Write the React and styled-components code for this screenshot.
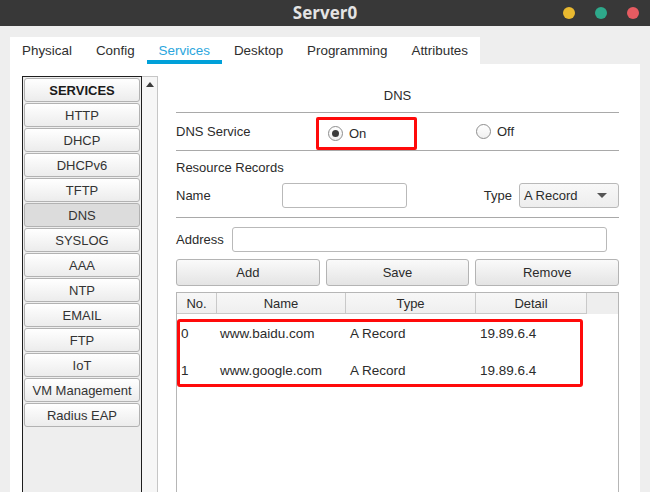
import React from 'react'
import styled, { createGlobalStyle, css } from 'styled-components'

const GlobalStyle = createGlobalStyle`
  html, body {
    margin: 0;
    padding: 0;
    background: #eeeeee;
  }
  body {
    font-family: "Liberation Sans", Arial, sans-serif;
    font-size: 13px;
    color: #2b2b2b;
  }
  * {
    box-sizing: border-box;
  }
`

const Window = styled.div`
  width: 650px;
  height: 492px;
  overflow: hidden;
  display: flex;
  flex-direction: column;
  background: #eeeeee;
`

const TitleBar = styled.div`
  height: 26px;
  flex: none;
  background: #383838;
  display: grid;
  grid-template-columns: 1fr auto 1fr;
  align-items: center;
`

const Title = styled.div`
  grid-column: 2;
  font-family: "Open Sans", "DejaVu Sans", sans-serif;
  font-weight: 700;
  font-size: 17px;
  line-height: 26px;
  color: #e4e4e4;
`

const Dots = styled.div`
  grid-column: 3;
  justify-self: end;
  display: flex;
  gap: 20px;
  padding-right: 11px;
`

const Dot = styled.span`
  width: 12px;
  height: 12px;
  border-radius: 50%;
  background: ${({ color }) => color};
`

const Body = styled.div`
  flex: 1;
  min-height: 0;
  display: flex;
  flex-direction: column;
  padding: 11px 10px 0 10px;
`

const TabStrip = styled.div`
  align-self: flex-start;
  display: flex;
  height: 27px;
  background: #ffffff;
`

const Tab = styled.div`
  display: flex;
  align-items: center;
  padding: 4px 12px 0 12px;
  border-bottom: 4px solid transparent;
  color: #2e2e2e;
  font-size: 13.4px;
  white-space: nowrap;

  ${({ active }) =>
    active &&
    css`
      color: #2ba6dd;
      border-bottom-color: #00a0d9;
    `}
`

const Panel = styled.div`
  flex: 1;
  min-height: 0;
  display: flex;
  gap: 18px;
  padding: 12px 21px 0 12px;
  background: #ffffff;
`

const Sidebar = styled.div`
  display: flex;
  width: 136px;
  flex: none;
`

const ListBox = styled.div`
  width: 120px;
  border: 1px solid #1e1e1e;
  border-bottom: none;
  background: #eeeeee;
  padding: 1px 1px 0 1px;
  display: flex;
  flex-direction: column;
  gap: 1px;
`

const ServiceButton = styled.div`
  height: 24px;
  display: flex;
  align-items: center;
  justify-content: center;
  border: 1px solid #b2b2b2;
  border-radius: 3px;
  background: ${({ selected }) =>
    selected ? '#dcdcdc' : 'linear-gradient(#ffffff, #ececec)'};
  color: ${({ header }) => (header ? '#1a1a1a' : '#333333')};
  font-weight: ${({ header }) => (header ? 700 : 400)};
  white-space: nowrap;
`

const ScrollTrack = styled.div`
  width: 16px;
  border: 1px solid #c6c6c6;
  border-left: none;
  border-bottom: none;
  background: #f6f6f6;
`

const ScrollArrow = styled.div`
  height: 16px;
  display: flex;
  justify-content: center;
  padding-top: 5px;
  background: #f6f6f6;

  &::before {
    content: '';
    width: 0;
    height: 0;
    border-left: 4px solid transparent;
    border-right: 4px solid transparent;
    border-bottom: 5px solid #3c3c3c;
  }
`

const Content = styled.div`
  flex: 1;
  display: flex;
  flex-direction: column;
`

const Heading = styled.div`
  height: 36px;
  display: flex;
  align-items: flex-end;
  justify-content: center;
  padding-bottom: 6px;
  line-height: 20px;
`

const Divider = styled.div`
  height: 1px;
  flex: none;
  background: #a9a9a9;
  margin-top: ${({ top }) => top || 0}px;
`

const ServiceRow = styled.div`
  height: 37px;
  display: flex;
  align-items: flex-start;
`

const RowLabel = styled.div`
  width: ${({ width }) => width}px;
  flex: none;
  align-self: center;
`

const Highlight = styled.div`
  width: 101px;
  height: 33px;
  margin-top: 4px;
  border: 3px solid #ff0a0a;
  border-radius: 2px;
  display: flex;
  align-items: center;
  padding-left: 9px;
`

const RadioOption = styled.label`
  display: flex;
  align-items: center;
  gap: 6px;
  line-height: 15px;
  align-self: ${({ standalone }) => (standalone ? 'center' : 'auto')};
  margin-left: ${({ offset }) => offset || 0}px;
`

const Radio = styled.span`
  width: 15px;
  height: 15px;
  border-radius: 50%;
  border: 1px solid #8e8e8e;
  background: linear-gradient(#ffffff, #f0f0f0);
  display: flex;
  align-items: center;
  justify-content: center;

  &::after {
    content: '';
    width: 7px;
    height: 7px;
    border-radius: 50%;
    background: ${({ checked }) => (checked ? '#3a3a3a' : 'transparent')};
  }
`

const SectionLabel = styled.div`
  padding-top: 8px;
  line-height: 18px;
`

const FieldRow = styled.div`
  height: 25px;
  margin-top: ${({ top }) => top}px;
  display: flex;
  align-items: center;
`

const TextInput = styled.div`
  height: 25px;
  width: ${({ width }) => width}px;
  border: 1px solid #b9b9b9;
  border-radius: 3px;
  background: #ffffff;
`

const TypeGroup = styled.div`
  margin-left: auto;
  display: flex;
  align-items: center;
  gap: 7px;
`

const Select = styled.div`
  width: 100px;
  height: 25px;
  border: 1px solid #b9b9b9;
  border-radius: 3px;
  background: linear-gradient(#f8f8f8, #ededed);
  display: flex;
  align-items: center;
  justify-content: space-between;
  padding: 0 11px 0 4px;

  &::after {
    content: '';
    width: 0;
    height: 0;
    border-left: 5px solid transparent;
    border-right: 5px solid transparent;
    border-top: 5px solid #555555;
  }
`

const ButtonRow = styled.div`
  display: flex;
  gap: 6px;
  margin-top: 7px;
`

const ActionButton = styled.div`
  flex: 1;
  height: 27px;
  display: flex;
  align-items: center;
  justify-content: center;
  border: 1px solid #b4b4b4;
  border-radius: 3px;
  background: linear-gradient(#fafafa, #e4e4e4);
`

const Table = styled.div`
  flex: 1;
  margin-top: 6px;
  border: 1px solid #b6b6b6;
  border-bottom: none;
  background: #ffffff;
  display: flex;
  flex-direction: column;
`

const HeaderRow = styled.div`
  height: 21px;
  display: grid;
  grid-template-columns: 40px 129px 130px 111px 1fr;
  background: #f0f0f0;
`

const HeaderCell = styled.div`
  display: flex;
  align-items: center;
  justify-content: center;
  border-right: ${({ filler }) => (filler ? 'none' : '1px solid #c9c9c9')};
  border-bottom: ${({ filler }) => (filler ? 'none' : '1px solid #c9c9c9')};
  background: ${({ filler }) => (filler ? '#eeeeee' : 'linear-gradient(#f7f7f7, #efefef)')};
`

const RecordGroup = styled.div`
  margin: 5px 35px 0 0;
  border: 3px solid #ff0a0a;
  border-radius: 3px;
  display: flex;
  flex-direction: column;
  gap: 15px;
  padding-bottom: 3px;
`

const RecordRow = styled.div`
  height: 22px;
  display: grid;
  grid-template-columns: 39px 130px 130px 1fr;
  align-items: center;
  font-size: 13.5px;
`

const RecordCell = styled.div`
  padding-left: 1px;
  white-space: nowrap;
`

const services = [
  'HTTP',
  'DHCP',
  'DHCPv6',
  'TFTP',
  'DNS',
  'SYSLOG',
  'AAA',
  'NTP',
  'EMAIL',
  'FTP',
  'IoT',
  'VM Management',
  'Radius EAP'
]

const tabs = ['Physical', 'Config', 'Services', 'Desktop', 'Programming', 'Attributes']

const records = [
  { no: '0', name: 'www.baidu.com', type: 'A Record', detail: '19.89.6.4' },
  { no: '1', name: 'www.google.com', type: 'A Record', detail: '19.89.6.4' }
]

export default function App() {
  return (
    <>
      <GlobalStyle />
      <Window>
        <TitleBar>
          <Title>Server0</Title>
          <Dots>
            <Dot color="#e9b930" />
            <Dot color="#2ea98b" />
            <Dot color="#e65b61" />
          </Dots>
        </TitleBar>
        <Body>
          <TabStrip>
            {tabs.map(t => (
              <Tab key={t} active={t === 'Services'}>
                {t}
              </Tab>
            ))}
          </TabStrip>
          <Panel>
            <Sidebar>
              <ListBox>
                <ServiceButton header>SERVICES</ServiceButton>
                {services.map(s => (
                  <ServiceButton key={s} selected={s === 'DNS'}>
                    {s}
                  </ServiceButton>
                ))}
              </ListBox>
              <ScrollTrack>
                <ScrollArrow />
              </ScrollTrack>
            </Sidebar>
            <Content>
              <Heading>DNS</Heading>
              <Divider />
              <ServiceRow>
                <RowLabel width={140}>DNS Service</RowLabel>
                <Highlight>
                  <RadioOption>
                    <Radio checked />
                    On
                  </RadioOption>
                </Highlight>
                <RadioOption standalone offset={59}>
                  <Radio />
                  Off
                </RadioOption>
              </ServiceRow>
              <Divider />
              <SectionLabel>Resource Records</SectionLabel>
              <FieldRow top={6}>
                <RowLabel width={106}>Name</RowLabel>
                <TextInput width={125} />
                <TypeGroup>
                  Type
                  <Select>A Record</Select>
                </TypeGroup>
              </FieldRow>
              <Divider top={9} />
              <FieldRow top={9}>
                <RowLabel width={56}>Address</RowLabel>
                <TextInput width={375} />
              </FieldRow>
              <ButtonRow>
                <ActionButton>Add</ActionButton>
                <ActionButton>Save</ActionButton>
                <ActionButton>Remove</ActionButton>
              </ButtonRow>
              <Table>
                <HeaderRow>
                  <HeaderCell>No.</HeaderCell>
                  <HeaderCell>Name</HeaderCell>
                  <HeaderCell>Type</HeaderCell>
                  <HeaderCell>Detail</HeaderCell>
                  <HeaderCell filler />
                </HeaderRow>
                <RecordGroup>
                  {records.map(r => (
                    <RecordRow key={r.no}>
                      <RecordCell>{r.no}</RecordCell>
                      <RecordCell>{r.name}</RecordCell>
                      <RecordCell>{r.type}</RecordCell>
                      <RecordCell>{r.detail}</RecordCell>
                    </RecordRow>
                  ))}
                </RecordGroup>
              </Table>
            </Content>
          </Panel>
        </Body>
      </Window>
    </>
  )
}
